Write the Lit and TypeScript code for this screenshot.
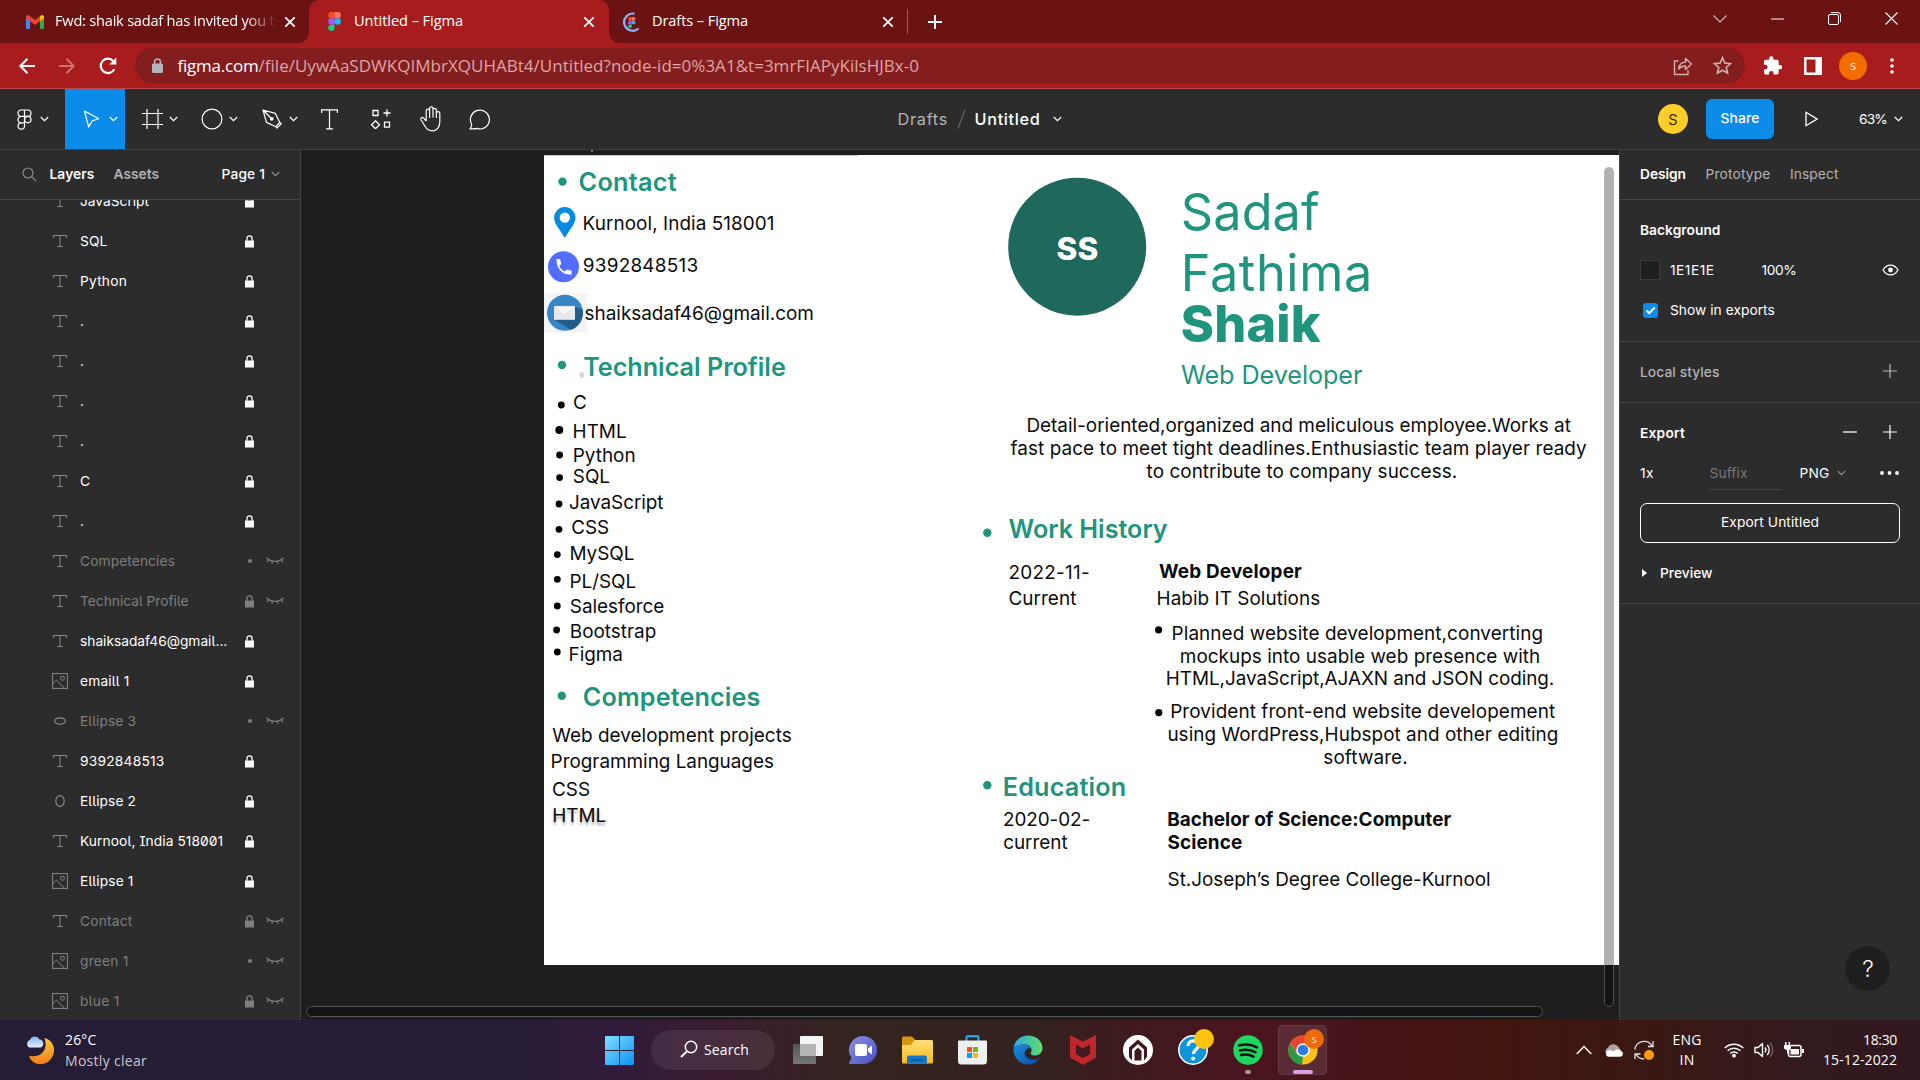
import { LitElement, html, svg, css, nothing } from "lit";
import { customElement, property } from "lit/decorators.js";
import { styleMap } from "lit/directives/style-map.js";

/* Text that tracks itself in or out to fill a given width. */
@customElement("fit-text")
class FitText extends LitElement {
  @property({ type: Number }) w = 0;
  @property() text = "";
  static styles = css`
    :host { display: inline-block; white-space: pre; flex: none; }
  `;
  render() {
    return html`<span>${this.text}</span>`;
  }
  updated() {
    const span = this.renderRoot.querySelector("span")!;
    span.style.letterSpacing = "0";
    if (!this.w) return;
    const natural = span.getBoundingClientRect().width;
    span.style.letterSpacing = (this.w - natural) / this.text.length + "px";
  }
}

const fit = (text: string, w: number, cls = "") =>
  html`<fit-text class=${cls} .text=${text} .w=${w}></fit-text>`;

const icon = (w: number, h: number, body: unknown, cls = "") =>
  html`<svg class="icon ${cls}" width=${w} height=${h} viewBox="0 0 ${w} ${h}" fill="none">${body}</svg>`;

const chevron = (cls = "") =>
  icon(9, 6, svg`<path d="M.8 1l3.7 3.6L8.200 1" stroke="currentColor" stroke-width="1.2"/>`, cls);

const closeX = () =>
  icon(12, 12, svg`<path d="M1.300 1.300l9.400 9.400M10.700 1.300l-9.400 9.400" stroke="#fff" stroke-width="1.8"/>`);

const figmaLogo = (w: number, h: number) => html`
  <svg class="icon" width=${w} height=${h} viewBox="0 0 12 18">
    <path d="M3 0h3v6H3a3 3 0 010-6z" fill="#f24e1e" />
    <path d="M6 0h3a3 3 0 010 6H6z" fill="#ff7262" />
    <path d="M3 6h3v6H3a3 3 0 010-6z" fill="#a259ff" />
    <circle cx="9" cy="9" r="3" fill="#1abcfe" />
    <path d="M3 12h3v3a3 3 0 11-3-3z" fill="#0acf83" />
  </svg>`;

const lock = () => icon(9, 13, svg`
  <path d="M0 5.500h9V12.500H0z" fill="currentColor"/>
  <path d="M2 6V3.300a2.500 2.500 0 015 0V6" stroke="currentColor" stroke-width="1.300"/>`);

const closedEye = () => icon(18, 8, svg`
  <path d="M.5 1C3 3.500 6 4.300 9 4.300S15 3.500 17.500 1M3 2.800L1 5M6.600 4.100L5.800 7M11.400 4.100L12.200 7M15 2.800L17 5" stroke="currentColor" stroke-width="1.200"/>`);

const kinds: Record<string, () => unknown> = {
  text: () => icon(14, 12, svg`<path d="M.5 3V.5h13V3M7 .5v11M4.200 11.500h5.600" stroke="currentColor"/>`),
  image: () => icon(16, 16, svg`<rect x=".6" y=".6" width="14.800" height="14.800" stroke="currentColor"/>
    <circle cx="10.400" cy="5.300" r="2" stroke="currentColor"/><path d="M1 10.500l3.500-3.300L12.500 15" stroke="currentColor"/>`),
  flat: () => icon(12, 8, svg`<ellipse cx="6" cy="4" rx="5.400" ry="3.200" stroke="currentColor" stroke-width="1.200"/>`),
  tall: () => icon(10, 12, svg`<ellipse cx="5" cy="6" rx="4.200" ry="5.400" stroke="currentColor" stroke-width="1.200"/>`),
};

type Layer = [kind: string, name: string, width: number, locked: boolean, hidden: boolean];
const layers: Layer[] = [
  ["text", "JavaScript", 69, true, false],
  ["text", "SQL", 27.5, true, false],
  ["text", "Python", 47, true, false],
  ["text", ".", 0, true, false],
  ["text", ".", 0, true, false],
  ["text", ".", 0, true, false],
  ["text", ".", 0, true, false],
  ["text", "C", 0, true, false],
  ["text", ".", 0, true, false],
  ["text", "Competencies", 95, false, true],
  ["text", "Technical Profile", 108.500, true, true],
  ["text", "shaiksadaf46@gmail...", 147.3, true, false],
  ["image", "emaill 1", 49.5, true, false],
  ["flat", "Ellipse 3", 56, false, true],
  ["text", "9392848513", 84.5, true, false],
  ["tall", "Ellipse 2", 56, true, false],
  ["text", "Kurnool, India 518001", 143.3, true, false],
  ["image", "Ellipse 1", 53.5, true, false],
  ["text", "Contact", 52.5, true, true],
  ["image", "green 1", 48.5, false, true],
  ["image", "blue 1", 39.5, true, true],
];

/* Text nodes on the canvas: left edge, baseline, text, style, optional width. */
type Node = [x: number, base: number, text: string, cls?: string, w?: number];
const nodes: Node[] = [
  [578.6, 191.600, "Contact", "h", 98.300],
  [582.6, 231, "Kurnool, India 518001", "p", 192],
  [582.8, 273.600, "9392848513", "p", 115.5],
  [584.6, 321, "shaiksadaf46@gmail.com", "p", 229.200],
  [583.2, 376, "Technical Profile", "h", 202.6],
  [573, 410.2, "C"],
  [572.6, 439, "HTML"],
  [572.8, 463.2, "Python"],
  [572.8, 484.800, "SQL"],
  [569, 510.2, "JavaScript", "p", 94.5],
  [571.2, 535.2, "CSS"],
  [569.4, 561.2, "MySQL"],
  [569.4, 589.2, "PL/SQL"],
  [569.8, 614.800, "Salesforce", "p", 94.5],
  [569.8, 639.700, "Bootstrap"],
  [568.5, 662, "Figma"],
  [582.800, 706.500, "Competencies", "h", 177.8],
  [552.300, 743.300, "Web development projects", "p", 239.400],
  [550.600, 769.2, "Programming Languages", "p", 223.3],
  [552, 797.200, "CSS"],
  [552.200, 823.2, "HTML", "p drop"],
  [1056.600, 260.6, "SS", "initials", 42],
  [1180.800, 230, "Sadaf", "name", 139],
  [1180.800, 291, "Fathima", "name", 192],
  [1180.800, 341.600, "Shaik", "surname", 140],
  [1181, 384.8, "Web Developer", "role", 181.4],
  [1026.400, 433.400, "Detail-oriented,organized and meliculous employee.Works at", "p", 544.5],
  [1010.6, 456.400, "fast pace to meet tight deadlines.Enthusiastic team player ready", "p", 576.2],
  [1146.6, 479.400, "to contribute to company success.", "p", 310.6],
  [1008.6, 538.900, "Work History", "h", 159],
  [1008.500, 580, "2022-11-", "p", 81.5],
  [1008.4, 606, "Current", "p", 68],
  [1159, 578.900, "Web Developer", "p b", 143],
  [1156.6, 606, "Habib IT Solutions", "p", 163.6],
  [1171.6, 640.900, "Planned website development,converting", "p", 371.5],
  [1179.800, 663.900, "mockups into usable web presence with", "p", 360.5],
  [1165.8, 686.800, "HTML,JavaScript,AJAXN and JSON coding.", "p", 388.4],
  [1170.2, 719, "Provident front-end website developement", "p", 385],
  [1167.4, 742, "using WordPress,Hubspot and other editing", "p", 391],
  [1323.3, 765, "software.", "p", 84.500],
  [1002.8, 796, "Education", "h", 123.5],
  [1003, 827.400, "2020-02-", "p", 87],
  [1003.2, 850.400, "current", "p", 64.4],
  [1167.200, 827.400, "Bachelor of Science:Computer", "p b", 284],
  [1167.4, 850.400, "Science", "p b", 75],
  [1167.6, 887.3, "St.Joseph’s Degree College-Kurnool", "p", 323],
];

const fontSize: Record<string, number> = { h: 25.2, p: 18.9, name: 50.4, surname: 50.4, role: 25.2, initials: 31.5 };
const ORIGIN_X = 544;
const ORIGIN_Y = 155;

const greenDots = [[562.5, 181.600], [562, 365], [561.800, 695.800], [987.300, 532.800], [987.300, 785.300]];
const blackDots = [
  [561.300, 405], [559.300, 430, 4], [559.600, 455], [559.600, 477.600], [559, 504], [559, 529.300], [557.300, 554.600],
  [557.300, 579.300], [557.300, 606], [556.600, 630], [557.300, 652], [1158.600, 629.800, 3.600], [1158.800, 712.600, 3.600],
];

@customElement("app-root")
class AppRoot extends LitElement {
  static styles = css`
    :host {
      display: grid; grid-template-rows: 43px 46px 61px 870px 60px;
      width: 1920px; height: 1080px; overflow: hidden; color: #fff;
      font-family: "Inter", sans-serif; font-size: 13.75px;
    }
    * { box-sizing: border-box; }
    .icon { display: block; flex: none; }
    .row { display: flex; align-items: center; }
    .grow { flex: 1; }

    .tabs { display: flex; background: #6b1212; font: 14.6px "Open Sans", sans-serif; }
    .tab { display: flex; align-items: center; height: 43px; position: relative; }
    .tab.first { width: 309px; padding: 0 13px 0 26px; }
    .tab.current { width: 300px; padding: 0 14px 0 19px; background: #a81c1d; border-radius: 10px 10px 0 0; }
    .tab.current::before, .tab.current::after {
      content: ""; position: absolute; bottom: 0; width: 10px; height: 10px;
    }
    .tab.current::before { left: -10px; background: radial-gradient(circle at 0 0, #6b1212 9.500px, #a81c1d 10px); }
    .tab.current::after { right: -10px; background: radial-gradient(circle at 100% 0, #6b1212 9.500px, #a81c1d 10px); }
    .tab.last { width: 298px; padding: 0 13px 0 13px; }
    .last .title { margin-left: 12px; }
    .title { line-height: 20px; margin-left: 11px; margin-top: -3px; }
    .current .title { margin-left: 13px; }
    .clip { width: 222px; overflow: hidden; -webkit-mask-image: linear-gradient(90deg, #000 86%, transparent); }
    .divider { width: 1px; height: 25px; background: #a55; align-self: center; }
    .newtab { margin: 0 0 0 19px; align-self: center; }
    .win { display: flex; align-items: center; gap: 44px; height: 37px; margin: 0 22px 0 auto; }

    .nav { display: flex; align-items: center; background: #a81c1d; border-bottom: 1px solid #b9494a; padding-left: 18px; font: 17px "Open Sans", sans-serif; }
    .nav .back { margin-right: 22px; }
    .nav .fwd { margin-right: 22px; }
    .omni { display: flex; align-items: center; width: 1610px; height: 35px; margin-left: 17px; border-radius: 18px; background: #831d1e; padding: 0 13px 0 17px; }
    .omni .host { margin-left: 14.5px; }
    .omni .path { color: #dea5a5; }
    .omni .share { margin-left: auto; margin-right: 20px; }
    .ext { margin-left: 18px; }
    .side { margin-left: 22px; }
    .me { width: 28px; height: 28px; border-radius: 50%; background: #f26c00; margin-left: 17px; display: grid; place-items: center; font: 13px "Open Sans", sans-serif; padding-bottom: 2px; }
    .kebab { margin-left: 23px; }

    .tools { display: flex; align-items: stretch; background: #2c2c2c; border-bottom: 1px solid #444; }
    .tool { width: 60px; display: flex; align-items: center; padding-left: 14px; gap: 5px; }
    .tool .slot { width: 25px; display: grid; place-items: center; }
    .tool.menu { width: 65px; padding-left: 11.5px; gap: 3.5px; }
    .tool.on { background: #0c8ce9; }
    .tool.single { width: 50px; padding: 0; justify-content: center; }
    .doc { display: flex; align-items: center; margin-left: 392.5px; font-size: 16.25px; line-height: 22px; }
    .doc .from { color: #b3b3b3; margin-right: 9px; }
    .doc .name { margin: 0 12px 0 8.5px; font-weight: 500; }
    .acts { display: flex; align-items: center; margin-left: auto; padding-right: 17.5px; }
    .avatar { width: 30px; height: 30px; border-radius: 50%; background: #ffcd29; color: #3a2c00; display: grid; place-items: center; font-size: 14.500px; }
    .share-btn { width: 68px; height: 40px; border-radius: 6px; background: #0c8ce9; margin: 0 31px 0 18px; display: grid; place-items: center; font-weight: 500; padding-bottom: 2px; }
    .play { margin-right: 41px; }
    .zoom { margin-right: 6.5px; }

    .work { display: grid; grid-template-columns: 301px 1318px 301px; min-height: 0; }
    .left { background: #2c2c2c; border-right: 1px solid #444; display: flex; flex-direction: column; overflow: hidden; }
    .head { display: flex; align-items: center; height: 50px; border-bottom: 1px solid #444; flex: none; padding-bottom: 1px; }
    .left .head { padding: 0 20px 1px 22px; }
    .strong { font-weight: 600; }
    .mid { font-weight: 500; }
    .dim { color: #b3b3b3; }
    .grey { color: #8c8c8c; }
    .left .head .strong { margin-left: 12.5px; margin-right: 19px; }
    .left .head .strong.dim { margin: 0; }
    .left .head .mid { margin-left: auto; margin-right: 6px; }
    .list { overflow: hidden; flex: 1; font-feature-settings: "ss02"; }
    .layers { margin-top: -19px; }
    .layer { height: 40px; display: grid; grid-template-columns: 20px 155px 30px 24px; column-gap: 10px; align-items: center; padding-left: 50px; line-height: 20px; }
    .layer.off { color: #7e7e7e; }
    .kind { color: #8a8a8a; display: grid; place-items: center; }
    .lockcell { display: flex; }
    .pin { width: 4px; height: 4px; border-radius: 50%; background: #7e7e7e; margin-left: 3px; }
    .layer .eye { margin-left: -19px; }

    .canvas { position: relative; background: #1e1e1e; overflow: hidden; }
    .frame-tick { position: absolute; left: 290px; top: 0; width: 2px; height: 2px; background: #777; }
    .board { position: absolute; left: 243px; top: 5px; width: 1075px; height: 810px; background: #fff; color: #0b0b0b; }
    .topline { position: absolute; left: 0; top: 0; width: 314px; height: 1px; background: #c4c4c4; }
    .shapes { position: absolute; left: 0; top: 0; }
    .board fit-text { position: absolute; line-height: 1.21; }
    .h { font-size: 25.200px; font-weight: 600; color: #20957e; }
    .p { font-size: 18.900px; }
    .b { font-weight: 700; }
    .name { font-size: 50.400px; color: #20957e; }
    .doc .name { font-size: 16.250px; color: #fff; }
    .surname { font-size: 50.400px; font-weight: 800; color: #20957e; }
    .role { font-size: 25.200px; color: #20957e; }
    .initials { font-size: 31.500px; font-weight: 800; color: #fff; }
    .drop { text-shadow: 0 2.500px 2.500px rgba(0, 0, 0, .35); }
    .vbar { position: absolute; left: 1303px; top: 17px; width: 10px; height: 840px; border-radius: 5px; background: rgba(0, 0, 0, .31); border: 1px solid rgba(190, 190, 190, .35); }
    .hbar { position: absolute; left: 5px; top: 856px; width: 1237px; height: 11px; border-radius: 6px; background: #141414; border: 1px solid #555; }

    .right { background: #2c2c2c; border-left: 1px solid #444; display: flex; flex-direction: column; position: relative; line-height: 20px; }
    .right .head { padding-left: 20px; gap: 19.5px; }
    .sec { border-bottom: 1px solid #444; padding: 0 20px; }
    .line { display: flex; align-items: center; height: 40px; }
    .bg { height: 142px; padding-top: 10px; }
    .swatch { width: 20px; height: 20px; background: #1e1e1e; border: 1px solid #3b3b3b; margin-right: 10px; }
    .pct { margin-left: 47px; }
    .end { margin-left: auto; }
    .look { margin-right: 1.500px; }
    .check { width: 15px; height: 15px; border-radius: 3px; background: #0c8ce9; margin: 1px 12px 0 3px; display: grid; place-items: center; }
    .styles { height: 61px; padding-top: 10px; }
    .export { height: 201px; padding-top: 10px; }
    .styles .icon, .export .first .icon { margin-top: -2px; }
    .minus { margin-left: auto; margin-right: 26px; }
    .styles .end, .plus { margin-right: 3px; }
    .suffix { width: 73px; height: 33px; display: flex; align-items: center; border-bottom: 1px solid #444; margin: 1px 18px 0 54.500px; color: #777; padding-left: 1px; }
    .more { margin-left: auto; margin-right: 1px; }
    .png { margin-right: 7px; }
    .outline { height: 40px; border: 1px solid #fff; border-radius: 7px; display: grid; place-items: center; margin-top: 10px; padding-bottom: 3px; }
    .preview { padding-left: 2px; margin-top: 10px; }
    .preview .mid { margin-left: 13px; }
    .help { position: absolute; right: 30px; bottom: 29px; width: 45px; height: 45px; border-radius: 50%; background: #1e1e1e; display: grid; place-items: center; font-size: 23px; font-weight: 300; padding-left: 1px; }

    .task { display: flex; align-items: center; font: 14px/20px "Open Sans", sans-serif; padding-left: 26px;
      background: linear-gradient(90deg, #251c35 0, #261c37 510px, #301b3b 610px, #3a1c2f 720px, #33241f 850px, #33221f 1040px, #3c1b1e 1110px, #4a1520 1240px, #451318 1370px, #42150f 1500px, #3a1813 1640px, #331a1e 1800px, #30181e 1920px); }
    .weather { display: flex; gap: 10px; width: 579px; align-items: center; }
    .weather .dim { margin-top: 1px; color: #c9c6cf; }
    .stack { display: flex; flex-direction: column; line-height: 20px; }
    .pill { width: 124px; height: 40px; border-radius: 20px; background: rgba(255, 255, 255, .08); display: flex; align-items: center; padding-left: 29px; gap: 6px; margin: 0 5px 0 17px; }
    .pill .icon { margin-top: -2px; }
    .app { width: 55px; height: 60px; display: grid; place-items: center; position: relative; }
    .app.active::before { content: ""; position: absolute; inset: 5px 3px; border-radius: 5px; background: rgba(255, 255, 255, .1); border: 1px solid rgba(255, 255, 255, .08); }
    .app .icon { position: relative; }
    .run { position: absolute; bottom: 6px; left: 25px; width: 6px; height: 4px; border-radius: 2px; background: #a99; }
    .active .run { left: 18px; width: 20px; background: #dd9fe4; }
    .badge { position: absolute; left: 29px; top: 9px; width: 20px; height: 20px; border-radius: 50%; background: #ffc20e; display: grid; place-items: center; font-size: 11px; line-height: 18px; }
    .active .badge { background: #ee6a0b; color: #ffd9b8; }
    .tray { display: flex; align-items: center; margin-left: auto; padding-right: 23px; }
    .tray .up { margin-right: 12px; }
    .tray .cloud { margin-right: 10px; }
    .tray .sync { margin-right: 18px; }
    .lang { width: 30px; align-items: center; margin-right: 22px; }
    .tray .wifi, .tray .vol { margin-right: 10px; }
    .clock { width: 74px; margin-left: 19px; align-items: flex-end; }
  `;

  private tabs() {
    return html`
      <header class="tabs">
        <div class="tab first">
          ${icon(18, 14, svg`
            <path d="M0 1.500V13a1 1 0 001 1h3V6z" fill="#4285f4"/><path d="M18 1.500V13a1 1 0 01-1 1h-3V6z" fill="#34a853"/>
            <path d="M0 3.200V2C0 .3 1.700-.4 3 .4L9 5l6-4.600-1 5.800L9 10 4 6.200z" fill="#ea4335"/><path d="M14 1.200l1-.8C16.300-.4 18 .3 18 2v1.200l-4 3z" fill="#fbbc04"/>`)}
          <div class="title clip">${fit("Fwd: shaik sadaf has invited you to", 228)}</div>
          <span class="grow"></span>${closeX()}
        </div>
        <div class="tab current">${figmaLogo(13, 19)}<div class="title">${fit("Untitled – Figma", 109)}</div><span class="grow"></span>${closeX()}</div>
        <div class="tab last">
          <svg class="icon" width="18" height="20" viewBox="0 0 18 20">
            <path d="M12.500 1.700A8.600 8.600 0 1016.500 16.500" fill="none" stroke="#8ab4f8" stroke-width="2.200" />
            <g transform="translate(6 5) scale(.62)">
              <path d="M3 0h3v6H3a3 3 0 010-6z" fill="#f24e1e" /><path d="M6 0h3a3 3 0 010 6H6z" fill="#ff7262" />
              <path d="M3 6h3v6H3a3 3 0 010-6z" fill="#a259ff" /><circle cx="9" cy="9" r="3" fill="#1abcfe" />
              <path d="M3 12h3v3a3 3 0 11-3-3z" fill="#0acf83" />
            </g>
          </svg>
          <div class="title">${fit("Drafts – Figma", 96)}</div><span class="grow"></span>${closeX()}
        </div>
        <span class="divider"></span>
        <span class="newtab">${icon(16, 16, svg`<path d="M8 1v14M1 8h14" stroke="#fff" stroke-width="2"/>`)}</span>
        <div class="win">
          ${icon(14, 8, svg`<path d="M.5.500L7 7 13.500.5" stroke="#d6bcbc" stroke-width="1.100"/>`)}
          ${icon(13, 2, svg`<path d="M0 1h13" stroke="#fff"/>`)}
          ${icon(13, 13, svg`<rect x=".5" y="2.500" width="10" height="10" rx="1.500" stroke="#fff"/><path d="M3 .600h7a2.500 2.500 0 012.500 2.500V10" stroke="#fff"/>`)}
          ${icon(13, 13, svg`<path d="M.5.500l12 12M12.500.500l-12 12" stroke="#fff" stroke-width="1.100"/>`)}
        </div>
      </header>`;
  }

  private nav() {
    return html`
      <div class="nav">
        ${icon(18, 18, svg`<path d="M17 9H3M9.500 1.800L2.300 9l7.200 7.200" stroke="#fff" stroke-width="2"/>`, "back")}
        ${icon(18, 18, svg`<path d="M1 9h14M8.500 1.800L15.700 9l-7.200 7.200" stroke="#cf6f70" stroke-width="2"/>`, "fwd")}
        ${icon(20, 20, svg`<path d="M16.300 13.200A7.200 7.200 0 1115.200 4.900" stroke="#fff" stroke-width="2.200"/><path d="M18.300 1.500v7h-7z" fill="#fff"/>`)}
        <div class="omni">
          ${icon(11, 15, svg`<rect y="5.500" width="11" height="9.500" rx="1.500" fill="#b5b5ba"/><path d="M2.600 6V3.800a2.900 2.900 0 015.800 0V6" stroke="#b5b5ba" stroke-width="1.500"/>`)}
          ${fit("figma.com", 81, "host")}${fit("/file/UywAaSDWKQIMbrXQUHABt4/Untitled?node-id=0%3A1&t=3mrFIAPyKilsHJBx-0", 660.5, "path")}
          ${icon(20, 20, svg`<path d="M5.500 5H1.500v13.500h13.500V14" stroke="#cfb0b0" stroke-width="1.400"/><path d="M5.500 13c.5-4.500 3.200-6.700 7-6.900V2.500L18.500 8l-6 5.500V10c-3-.1-5.200.8-7 3z" stroke="#cfb0b0" stroke-width="1.400" stroke-linejoin="round"/>`, "share")}
          ${icon(19, 19, svg`<path d="M9.500 1.700l2.300 5.400 5.900.5-4.500 3.900 1.400 5.700-5.100-3-5.100 3 1.400-5.700L1.300 7.600l5.900-.5z" stroke="#cfb0b0" stroke-width="1.600"/>`)}
        </div>
        ${icon(19, 19, svg`<path d="M17 9h-1.300V5.500c0-1-.8-1.700-1.700-1.700h-3.500V2.400a2.100 2.100 0 00-4.300 0v1.400H2.700C1.700 3.800 1 4.500 1 5.500v3.300h1.300a2.300 2.300 0 010 4.600H1v3.400c0 .9.700 1.700 1.700 1.700H6v-1.300a2.300 2.300 0 014.600 0v1.300h3.300c1 0 1.700-.8 1.700-1.700v-3.500H17A2.100 2.100 0 0017 9z" fill="#fff"/>`, "ext")}
        ${icon(18, 18, svg`<path d="M1.300 1.300h15.400v15.400H1.300z" stroke="#fff" stroke-width="2.400"/><path d="M11.500 1h5.500v16h-5.500z" fill="#fff"/>`, "side")}
        <span class="me">s</span>
        ${icon(4, 16, svg`<circle cx="2" cy="2" r="1.800" fill="#fff"/><circle cx="2" cy="8" r="1.800" fill="#fff"/><circle cx="2" cy="14" r="1.800" fill="#fff"/>`, "kebab")}
      </div>`;
  }

  private tool(ic: unknown, cls = "") {
    return html`<div class="tool ${cls}"><span class="slot">${ic}</span>${cls === "single" ? nothing : chevron()}</div>`;
  }

  private toolbar() {
    const s = "#fff";
    return html`
      <div class="tools">
        ${this.tool(icon(15, 21, svg`<path d="M7.500 1H4.200a3.200 3.200 0 000 6.400h3.300zM7.500 1h3.300a3.200 3.200 0 010 6.400H7.500zM7.500 7.400H4.200a3.200 3.200 0 000 6.400h3.300zM4.200 13.800a3.200 3.200 0 103.300 3.200v-3.200z" stroke=${s} stroke-width="1.200"/><circle cx="10.800" cy="10.600" r="3.200" stroke=${s} stroke-width="1.200"/>`), "menu")}
        ${this.tool(icon(17, 18, svg`<path d="M1.500 1l14.300 7.800-6.500 2-3.600 6.200z" stroke=${s} stroke-width="1.200" stroke-linejoin="round"/>`), "on")}
        ${this.tool(icon(23, 20, svg`<path d="M7 0v20M18 0v20M2 4.500h21M2 15.500h21" stroke=${s} stroke-width="1.200"/>`))}
        ${this.tool(icon(22, 22, svg`<circle cx="11" cy="11" r="9.900" stroke=${s} stroke-width="1.200"/>`))}
        ${this.tool(icon(20, 20, svg`<path d="M1 1l12.300 3.300 4.500 9.200-4 4.200-9.300-4.300zM13.800 17.700l1.200 1.300 4.300-4.300-1.500-1.200M1 1l7.400 7.500" stroke=${s} stroke-width="1.200" stroke-linejoin="round"/><circle cx="9.700" cy="9.800" r="1.900" fill=${s}/>`))}
        ${this.tool(icon(19, 21, svg`<path d="M.6 4V.800h15.800V4M8.500.800v19M5 19.900h7" stroke=${s} stroke-width="1.200"/>`), "single")}
        ${this.tool(icon(22, 20, svg`<path d="M4 1.500h5v5H4zM15.500 13.200h5v5h-5zM6.500 11.800l4 4-4 4-4-4zM18 .500v7M14.500 4h7" stroke=${s} stroke-width="1.300"/>`), "single")}
        ${this.tool(icon(23, 26, svg`<path d="M7.200 15V4.800a1.700 1.700 0 013.400 0V12M10.600 11V2.500a1.700 1.700 0 013.400 0V11.500M14 11V4a1.700 1.700 0 013.400 0v8M17.400 12V7.300a1.700 1.700 0 013.400 0V16c0 5-3 8.800-7.500 8.800-3.700 0-5.600-1.800-7.300-4.600l-4-6.400c-.9-1.600 1-3 2.400-1.900L7.200 15" stroke=${s} stroke-width="1.200" stroke-linejoin="round"/>`), "single")}
        ${this.tool(icon(23, 21, svg`<path d="M1 19.800c1.500-1.700 1.900-3 1.500-4.800A9.500 9.500 0 1112 20c-1.500 0-2.500-.2-3.500-.6-1.800.5-4.500.6-7.500.4z" stroke=${s} stroke-width="1.200" stroke-linejoin="round"/>`), "single")}
        <div class="doc">
          ${fit("Drafts", 50.5, "from")}
          ${icon(9, 20, svg`<path d="M8 .500L1 19.500" stroke="#777"/>`)}
          ${fit("Untitled", 66, "name")}${chevron()}
        </div>
        <div class="acts">
          <span class="avatar">S</span>
          <span class="share-btn">${fit("Share", 39)}</span>
          ${icon(13, 16, svg`<path d="M1 1.300L12 8 1 14.700z" stroke=${s} stroke-width="1.300"/>`, "play")}
          ${fit("63%", 28, "zoom")}${chevron()}
        </div>
      </div>`;
  }

  private layerPanel() {
    return html`
      <aside class="left">
        <div class="head">
          ${icon(15, 15, svg`<circle cx="6" cy="6" r="5" stroke="#8c8c8c" stroke-width="1.200"/><path d="M9.700 9.700l4.600 4.600" stroke="#8c8c8c" stroke-width="1.200"/>`)}
          ${fit("Layers", 45, "strong")}${fit("Assets", 45.500, "strong dim")}${fit("Page 1", 43.5, "mid")}${chevron("grey")}
        </div>
        <div class="list"><div class="layers">
          ${layers.map(([kind, name, w, locked, hidden]) => html`
            <div class="layer ${hidden ? "off" : ""}">
              <span class="kind">${kinds[kind]()}</span>
              <span>${fit(name, w)}</span>
              <span class="lockcell">${locked ? lock() : html`<i class="pin"></i>`}</span>
              <span class="eye">${hidden ? closedEye() : nothing}</span>
            </div>`)}
        </div></div>
      </aside>`;
  }

  private board() {
    return html`
      <main class="canvas">
        <i class="frame-tick"></i>
        <div class="board">
          <i class="topline"></i>
          <svg class="shapes" width="1075" height="810" viewBox="544 155 1075 810">
            <circle cx="1077.200" cy="246.700" r="69" fill="#1e695b" />
            ${greenDots.map(([x, y]) => svg`<circle cx=${x} cy=${y} r="4.200" fill="#20957e"/>`)}
            ${blackDots.map(([x, y, r]) => svg`<circle cx=${x} cy=${y} r=${r ?? 3.4} fill="#000"/>`)}
            <ellipse cx="581.800" cy="375" rx="2.500" ry="3" fill="#d9d9d9" />
            <path fill-rule="evenodd" d="M564.800 207a10.700 10.700 0 0110.700 10.700c0 6.500-6.500 12.300-10.700 20.300-4.200-8-10.700-13.800-10.700-20.300A10.700 10.700 0 01564.800 207zm0 5.400a5.200 5.200 0 100 10.400 5.200 5.200 0 000-10.400z" fill="#0689e0" />
            <circle cx="563.500" cy="266.800" r="15.500" fill="#536dfe" />
            <path d="M556.500 259h3.600l1.100 5-2 2c1.300 2.600 3 4.300 5.600 5.600l2-2 4.800 1.100v3.800c-8.400 1-15.700-6-15.100-15.500z" fill="#fff" />
            <path d="M544 293h43.600v40H544z" fill="#f5f5f5" />
            <circle cx="565" cy="312.800" r="18" fill="#3787c8" />
            <path d="M575 306.500l7.600 3a18 18 0 01-11.600 20.300l-17-10z" fill="#235d8b" />
            <path d="M554 306.300h21v13.500h-21z" fill="#e9e9e9" />
            <path d="M554 306.300h21l-10.500 8.500z" fill="#fafafa" stroke="#cfcfcf" stroke-width=".5" />
          </svg>
          ${nodes.map(([x, base, text, cls = "p", w = 0]) => html`
            <fit-text class=${cls} .text=${text} .w=${w} style=${styleMap({
              left: x - ORIGIN_X + "px",
              top: base - 0.969 * fontSize[cls.split(" ")[0]] - ORIGIN_Y + "px",
            })}></fit-text>`)}
        </div>
        <i class="vbar"></i><i class="hbar"></i>
      </main>`;
  }

  private inspector() {
    const plus = (c: string, cls: string) => icon(14, 14, svg`<path d="M7 0v14M0 7h14" stroke=${c} stroke-width="1.200"/>`, cls);
    return html`
      <aside class="right">
        <div class="head">${fit("Design", 46, "strong")}${fit("Prototype", 65, "dim")}${fit("Inspect", 48.5, "dim")}</div>
        <section class="sec bg">
          <div class="line">${fit("Background", 80.500, "strong")}</div>
          <div class="line"><i class="swatch"></i>${fit("1E1E1E", 44.5)}${fit("100%", 35, "pct")}
            ${icon(17, 12, svg`<path d="M1 6c2-3.300 4.500-4.900 7.500-4.900S14 2.700 16 6c-2 3.300-4.500 4.900-7.500 4.900S3 9.300 1 6z" stroke="#fff" stroke-width="1.300"/><circle cx="8.500" cy="6" r="2.400" fill="#fff"/>`, "end look")}</div>
          <div class="line"><i class="check">${icon(11, 9, svg`<path d="M1.500 4.500l2.700 2.700L9.700 1.500" stroke="#fff" stroke-width="1.900"/>`)}</i>${fit("Show in exports", 104.8)}</div>
        </section>
        <section class="sec styles"><div class="line">${fit("Local styles", 79.500, "mid dim")}${plus("#b3b3b3", "end")}</div></section>
        <section class="sec export">
          <div class="line first">${fit("Export", 45, "strong")}${icon(14, 2, svg`<path d="M0 1h14" stroke="#fff" stroke-width="1.300"/>`, "minus")}${plus("#fff", "plus")}</div>
          <div class="line">${fit("1x", 14)}<span class="suffix">${fit("Suffix", 38)}</span>${fit("PNG", 30, "png")}${chevron("grey")}
            ${icon(19, 4, svg`<circle cx="2" cy="2" r="1.900" fill="#fff"/><circle cx="9.500" cy="2" r="1.900" fill="#fff"/><circle cx="17" cy="2" r="1.900" fill="#fff"/>`, "more")}</div>
          <div class="outline">${fit("Export Untitled", 98)}</div>
          <div class="line preview">${icon(5, 8, svg`<path d="M0 0l5 4-5 4z" fill="#fff"/>`)}${fit("Preview", 52.500, "mid")}</div>
        </section>
        <span class="help">?</span>
      </aside>`;
  }

  private app(ic: unknown, extra: unknown = nothing, cls = "") {
    return html`<div class="app ${cls}">${ic}${extra}</div>`;
  }

  private taskbar() {
    return html`
      <footer class="task">
        <div class="weather">
          ${icon(29, 29, svg`<defs><linearGradient id="moon" x1="0" y1="0" x2="0" y2="1"><stop stop-color="#ffc83d"/><stop offset="1" stop-color="#f07f1b"/></linearGradient>
            <linearGradient id="cl" x1="0" y1="0" x2="0" y2="1"><stop stop-color="#7fb0ee"/><stop offset="1" stop-color="#e8f1ff"/></linearGradient></defs>
            <path d="M18.500 2C26 4 29.500 11 27.500 18 25 26.500 16 30.500 9 27c-3-1.500-5-4-6-7 6 1 11 0 14-4 3-4 3.300-9 1.500-14z" fill="url(#moon)"/>
            <path d="M4.200 11.500a3.800 3.800 0 01-.2-7.400 5.200 5.200 0 019.600-.7 4.200 4.200 0 011 8.100z" fill="url(#cl)"/>`)}
          <div class="stack">${fit("26°C", 31.5)}${fit("Mostly clear", 82, "dim")}</div>
        </div>
        ${icon(29, 29, svg`<defs><linearGradient id="w" x1="0" y1="0" x2="1" y2="1"><stop stop-color="#7fe0ff"/><stop offset="1" stop-color="#0b93f2"/></linearGradient></defs>
          <path d="M0 1a1 1 0 011-1h13v14H0zM15 0h13a1 1 0 011 1v13H15zM0 15h14v14H1a1 1 0 01-1-1zM15 15h14v13a1 1 0 01-1 1H15z" fill="url(#w)"/>`)}
        <div class="pill">${icon(18, 18, svg`<circle cx="11" cy="7" r="5.700" stroke="#fff" stroke-width="1.500"/><path d="M7 11.200L1 17" stroke="#fff" stroke-width="2"/>`)}${fit("Search", 45)}</div>
        ${this.app(icon(30, 28, svg`<defs><linearGradient id="tv" x1="0" y1="0" x2="0" y2="1"><stop stop-color="#555"/><stop offset="1" stop-color="#777"/></linearGradient></defs><rect x="7" width="23" height="20" rx="1" fill="#f4f4f4"/><rect y="8" width="23" height="20" rx="1" fill="url(#tv)"/><path d="M7 8h16v12H7z" fill="#b5b5b5"/>`))}
        ${this.app(icon(30, 30, svg`<defs><linearGradient id="ch" x1="0" y1="0" x2="1" y2="1"><stop stop-color="#8b8fe0"/><stop offset="1" stop-color="#4a4fc4"/></linearGradient></defs><path d="M15 1a14 14 0 110 28H2c-1 0-1.200-.8-.8-1.500L3.500 23A14 14 0 0115 1z" fill="url(#ch)"/><rect x="7" y="9" width="12" height="12" rx="2" fill="#fff"/><path d="M20 13.500l4-3v9l-4-3z" fill="#fff"/>`))}
        ${this.app(icon(31, 28, svg`<defs><linearGradient id="fo" x1="0" y1="0" x2="0" y2="1"><stop stop-color="#ffe07a"/><stop offset="1" stop-color="#f9b81c"/></linearGradient></defs><path d="M0 2a1.500 1.500 0 011.500-1.500H10L13.500 4H20v6H0z" fill="#d9950f"/><path d="M0 9h9l3.500-5H29.500A1.500 1.500 0 0131 5.500V26a1.500 1.500 0 01-1.500 1.500h-28A1.500 1.500 0 010 26z" fill="url(#fo)"/><path d="M5 27.500v-6a2 2 0 012-2h16a2 2 0 012 2v6z" fill="#1277c9"/><path d="M9 24h12" stroke="#0a4f93" stroke-width="1.500"/>`))}
        ${this.app(icon(29, 30, svg`<path d="M8.500 7V2.200a1 1 0 011-1h10a1 1 0 011 1V7" stroke="#1fb6f2" stroke-width="2"/><path d="M0 6.500a1 1 0 011-1h27a1 1 0 011 1V26a3.500 3.500 0 01-3.500 3.500h-22A3.500 3.500 0 010 26z" fill="#efefef"/><path d="M9 12h5v5H9z" fill="#f25022"/><path d="M15 12h5v5h-5z" fill="#7fba00"/><path d="M9 18h5v5H9z" fill="#00a4ef"/><path d="M15 18h5v5h-5z" fill="#ffb900"/>`))}
        ${this.app(icon(30, 30, svg`<defs><linearGradient id="e1" x1="0" y1="0" x2="1" y2="0"><stop stop-color="#2aa7e6"/><stop offset="1" stop-color="#62df6a"/></linearGradient><linearGradient id="e2" x1="0" y1="0" x2="1" y2="1"><stop stop-color="#1b8be0"/><stop offset="1" stop-color="#0b4f9e"/></linearGradient></defs>
          <path d="M.5 13C1.500 5.500 7.500.500 15 .500c8.500 0 14.500 6 14.500 12.500 0 4.500-3.300 7.500-7.500 7.500-3 0-5-1-4.200-2.700C20 13.500 17 9.500 11.500 9.500 6.500 9.500 2.500 11 .5 13z" fill="url(#e1)"/>
          <path d="M.5 14C2.500 10.500 7 9 11 9.200c3.500.1 6 2 7 4.300-3-1-6.500 1.500-6 5.500.6 4.500 6 7.500 14.500 4.500C23.500 27.500 19.500 29.500 15 29.500 6.500 29.500 0 22 .5 14z" fill="url(#e2)"/><path d="M11.500 17c-1.500 5 5 10.500 14.500 7l1-.8C20 25.500 13 23.500 11.500 17z" fill="#0a3f80"/>`))}
        ${this.app(icon(28, 30, svg`<path d="M1 0l13 6.500L27 0v22.500L14 30 1 22.500z" fill="#c0272d"/><path d="M7 9.500l7 4 7-4V19l-7 4-7-4z" fill="#3f1a1e"/>`))}
        ${this.app(icon(30, 30, svg`<circle cx="15" cy="15" r="15" fill="#fff"/><path d="M6 22v-9.500L15 4.500l9 8V22l-3 3.500V14.500L15 9l-6 5.500v11z" fill="#40181d"/><path d="M11.500 25.500v-9.500L15 12.500l3.500 3.500v9.500" fill="#40181d"/>`))}
        ${this.app(icon(30, 30, svg`<circle cx="15" cy="15" r="14.200" fill="#0d96d8" stroke="#fff" stroke-width="1.500"/><path d="M10 11c0-7 10.500-6.500 10.500-.5 0 4-5.200 4-5.200 8.500" stroke="#fff" stroke-width="3.200"/><circle cx="15.200" cy="23.500" r="2" fill="#fff"/>`), html`<i class="badge"></i>`)}
        ${this.app(icon(30, 30, svg`<circle cx="15" cy="15" r="14.700" fill="#1ed760"/><path d="M6 10.500c6-1.700 13-1 18 1.800M7 15.500c5-1.400 11-.8 15.500 1.800M8 20c4.500-1 9-.5 12.500 1.600" stroke="#111" stroke-width="2.500" stroke-linecap="round"/>`), html`<i class="run"></i>`)}
        ${this.app(icon(30, 30, svg`<circle cx="15" cy="15" r="14.600" fill="#fbc116"/><path d="M2.400 7.700L9 19l6.500-.5L14 29.600A14.600 14.600 0 012.400 7.700z" fill="#2a9c48"/><path d="M9 18.500L15 21l-2.500 8.400A14.600 14.600 0 012.400 22z" fill="#2a9c48"/><path d="M2.400 7.700A14.600 14.600 0 0127.600 8.200H15l-6 10z" fill="#ea4335"/><circle cx="15" cy="15" r="6.800" fill="#fff"/><circle cx="15" cy="15" r="5.300" fill="#2d7de9"/>`), html`<i class="run"></i><span class="badge">s</span>`, "active")}
        <div class="tray">
          ${icon(16, 10, svg`<path d="M.7 9L8 1.500 15.300 9" stroke="#fff" stroke-width="1.400"/>`, "up")}
          ${icon(20, 13, svg`<path d="M3.500 11A4 4 0 014 3.800 6 6 0 0114.500 3L18 8z" fill="#b3a3a0"/><path d="M4 12.800a3.700 3.700 0 01-.3-6.500c2-1 4 .1 5.300 1.200l4-2.300c3 .3 3 1.300 4 1.800a3 3 0 01-.5 5.800z" fill="#fff"/>`, "cloud")}
          ${icon(20, 20, svg`<path d="M1 9.500A9 8.500 0 0118 6M19 1v5.500h-5M10 19A9 9 0 012 14M1 19v-5h5.500" stroke="#e8e0e0" stroke-width="1.300"/><circle cx="15" cy="15" r="5" fill="#ff9a0a"/>`, "sync")}
          <div class="stack lang">${fit("ENG", 29)}${fit("IN", 15)}</div>
          ${icon(20, 16, svg`<path d="M.8 6a13 13 0 0118.400 0M3.600 8.800a9 9 0 0112.800 0M6.300 11.500a5.200 5.200 0 017.400 0" stroke="#fff" stroke-width="1.500"/><circle cx="10" cy="13.700" r="1.900" fill="#fff"/>`, "wifi")}
          ${icon(20, 16, svg`<path d="M1 5.500h3L8.500 1.500v13L4 10.500H1z" stroke="#fff" stroke-width="1.400" stroke-linejoin="round"/><path d="M11 5.500a4 4 0 010 5M13.300 3a7.500 7.500 0 010 10" stroke="#fff" stroke-width="1.300"/><path d="M16 1a10.500 10.500 0 010 14" stroke="#7c6468" stroke-width="1.300"/>`, "vol")}
          ${icon(20, 16, svg`<rect x="4.500" y="3.500" width="12.500" height="11" rx="2" stroke="#fff" stroke-width="1.500"/><path d="M6.500 7h8.500v5.500H6.500zM18 7h2v4h-2zM0 3h7v3.500L5 8.500v3H3v-3L0 6.500zM1 0h1.500v3H1zM4.500 0H6v3H4.500z" fill="#fff"/>`)}
          <div class="stack clock">${fit("18:30", 34)}${fit("15-12-2022", 74)}</div>
        </div>
      </footer>`;
  }

  render() {
    return html`
      ${this.tabs()} ${this.nav()} ${this.toolbar()}
      <div class="work">${this.layerPanel()} ${this.board()} ${this.inspector()}</div>
      ${this.taskbar()}`;
  }
}
